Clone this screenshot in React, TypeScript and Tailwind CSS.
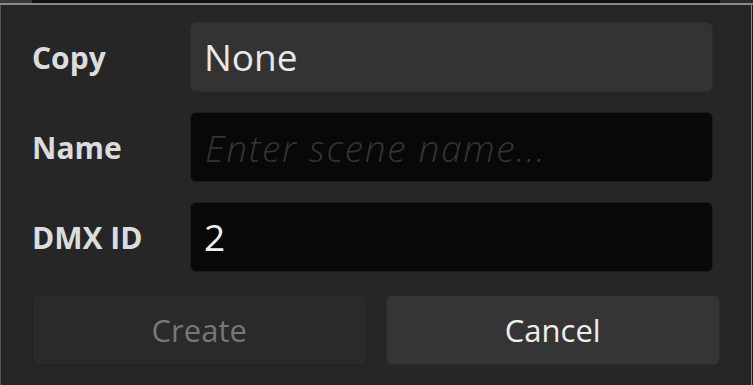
import React from "react";

export default function App() {
  return (
    <div
      className="w-[753px] h-[385px] bg-[#262626] flex flex-col overflow-hidden"
      style={{ fontFamily: '"Open Sans", "Noto Sans", sans-serif' }}
    >
      <div className="h-[3px] flex shrink-0">
        <div className="w-[32px] bg-[#3a3a3a]" />
        <div className="flex-1 bg-[#111111]" />
        <div className="w-[33px] bg-[#2c2c2c]" />
      </div>
      <div className="flex-1 flex border-t-2 border-[#8a8a8a]">
        <div className="w-px bg-[#555555]" />
        <div className="flex-1 flex flex-col pt-[17px] pl-[31px] pr-[31px]">
          <div className="flex flex-col gap-[20px] pr-[7px]">
            <div className="flex items-center h-[70px]">
              <div className="w-[158px] text-[30px] font-bold text-[#dcdcdc]">Copy</div>
              <div className="flex-1 h-full rounded-[6px] bg-[#333333] border border-[#2b2b2b] flex items-center pl-[13px] text-[37px] text-[#e8e8e8]">
                None
              </div>
            </div>
            <div className="flex items-center h-[70px]">
              <div className="w-[158px] text-[30px] font-bold text-[#dcdcdc]">Name</div>
              <input
                className="flex-1 h-full rounded-[6px] bg-[#080808] border border-[#1c1c1c] pl-[14px] text-[37px] font-light text-[#e8e8e8] italic tracking-[1.65px] placeholder:text-[#343434] outline-none"
                placeholder="Enter scene name..."
              />
            </div>
            <div className="flex items-center h-[70px]">
              <div className="w-[158px] text-[30px] font-bold text-[#dcdcdc]">DMX ID</div>
              <div className="flex-1 h-full rounded-[6px] bg-[#080808] border border-[#1c1c1c] flex items-center pl-[13px] text-[37px] text-[#f0f0f0]">
                2
              </div>
            </div>
          </div>
          <div className="flex gap-[19px] mt-[23px]">
            <button className="flex-1 h-[70px] rounded-[6px] bg-[#2a2a2a] border border-[#222222] text-[31px] text-[#777777]">
              Create
            </button>
            <button className="flex-1 h-[70px] rounded-[6px] bg-[#353535] border border-[#2a2a2a] text-[31px] text-[#eeeeee]">
              Cancel
            </button>
          </div>
        </div>
        <div className="w-px bg-[#8a8a8a]" />
        <div className="w-px bg-[#1a1a1a]" />
      </div>
    </div>
  );
}
